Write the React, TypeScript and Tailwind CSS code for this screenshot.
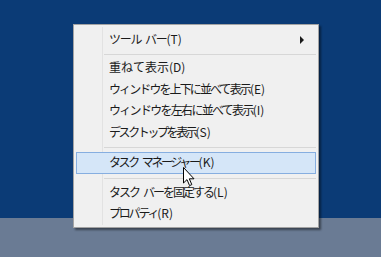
const font = { fontFamily: '"Noto Sans CJK JP", "Noto Sans", sans-serif' };

type RowProps = {
  words: string[];
  k: string;
  h: string;
  t: string;
  arrow?: boolean;
  active?: boolean;
};

function Row({ words, k, h, t, arrow, active }: RowProps) {
  return (
    <div className={`relative flex items-center ${h}`}>
      {active && (
        <div className="absolute inset-x-0 inset-y-0 border border-[#86aee0] bg-[#d5e6f8]" />
      )}
      <span className="relative -top-px pl-[33px] text-[12px] leading-none whitespace-pre text-[#1a1a1a]">
        {words.map((w, i) => (
          <span key={i}>
            {i > 0 && <span className="inline-block w-[4px]" />}
            <span className={t}>{w}</span>
          </span>
        ))}
        <span>({k})</span>
      </span>
      {arrow && (
        <svg className="absolute right-[11px]" width="5" height="8" viewBox="0 0 5 8">
          <path d="M0 0 L4 4 L0 8 Z" fill="#1a1a1a" />
        </svg>
      )}
    </div>
  );
}

function Sep({ h }: { h: string }) {
  return (
    <div className={`flex items-center pl-[28px] ${h}`}>
      <div className="h-px flex-1 bg-[#d7d7d7]" />
    </div>
  );
}

export default function App() {
  return (
    <div className="relative flex h-[257px] w-[381px] flex-col overflow-hidden" style={font}>
      <div className="h-[218px] bg-[#0b3b76]" />
      <div className="flex-1 bg-[#6a7b94]" />

      {/* context menu */}
      <div className="absolute left-[73px] top-[24px] w-[246px] border border-[#a3a3a3] bg-[#f0f0f0] px-[2px] py-[3px] shadow-[2px_2px_2px_rgba(0,0,0,0.45)]">
        <div className="pointer-events-none absolute bottom-[2px] left-[28px] top-[2px] w-px bg-[#e2e2e2]" />
        <Row h="h-[23px]" k="T" t="tracking-[-1.3px]" words={["ツール", "バー"]} arrow />
        <Sep h="h-[6px]" />
        <Row h="h-[22px]" k="D" t="tracking-[0px]" words={["重ねて表示"]} />
        <Row h="h-[21px]" k="E" t="tracking-[-1.9px]" words={["ウィンドウを上下に並べて表示"]} />
        <Row h="h-[22px]" k="I" t="tracking-[-1.7px]" words={["ウィンドウを左右に並べて表示"]} />
        <Row h="h-[21px]" k="S" t="tracking-[-2.4px]" words={["デスクトップを表示"]} />
        <Sep h="h-[9px]" />
        <Row h="h-[22px]" k="K" t="tracking-[-2.4px]" words={["タスク", "マネージャー"]} active />
        <Sep h="h-[8px]" />
        <Row h="h-[21px]" k="L" t="tracking-[-2px]" words={["タスク", "バーを固定する"]} />
        <Row h="h-[21px]" k="R" t="tracking-[-2.2px]" words={["プロパティ"]} />
      </div>

      {/* mouse pointer */}
      <svg className="absolute left-[183px] top-[167px]" width="13" height="20" viewBox="0 0 13 20">
        <path
          d="M0.5 0.5 L0.5 16 L4 12.6 L6.6 18.6 L8.8 17.6 L6.3 11.8 L11 11.8 Z"
          fill="#ffffff"
          stroke="#000000"
          strokeWidth="1"
          strokeLinejoin="miter"
        />
      </svg>
    </div>
  );
}
